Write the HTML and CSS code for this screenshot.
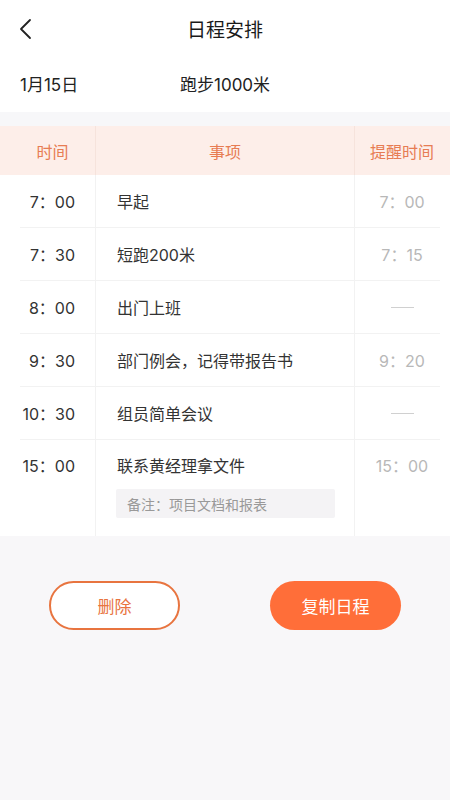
FILE: index.html
```html
<!DOCTYPE html>
<html lang="zh">
<head>
<meta charset="utf-8">
<link rel="stylesheet" href="styles.css">
</head>
<body>
<div class="page">
  <header class="topbar">
    <svg class="back" width="14" height="22" viewBox="0 0 14 22"><path d="M11 2 L2 11 L11 20" fill="none" stroke="#222" stroke-width="1.8" stroke-linecap="round" stroke-linejoin="round"/></svg>
    <h1 class="title">日程安排</h1>
  </header>
  <div class="summary">
    <span class="date">1月15日</span>
    <span class="goal">跑步1000米</span>
  </div>
  <div class="gap"></div>
  <div class="thead">
    <div class="grid">
      <div class="c1 h">时间</div>
      <div class="c2 h">事项</div>
      <div class="c3 h">提醒时间</div>
    </div>
  </div>
  <div class="tbody">
    <div class="grid row">
      <div class="c1">7：00</div>
      <div class="c2">早起</div>
      <div class="c3 r">7：00</div>
    </div>
    <div class="grid row">
      <div class="c1">7：30</div>
      <div class="c2">短跑200米</div>
      <div class="c3 r">7：15</div>
    </div>
    <div class="grid row">
      <div class="c1">8：00</div>
      <div class="c2">出门上班</div>
      <div class="c3 r"><span class="dash"></span></div>
    </div>
    <div class="grid row">
      <div class="c1">9：30</div>
      <div class="c2">部门例会，记得带报告书</div>
      <div class="c3 r">9：20</div>
    </div>
    <div class="grid row">
      <div class="c1">10：30</div>
      <div class="c2">组员简单会议</div>
      <div class="c3 r"><span class="dash"></span></div>
    </div>
    <div class="grid row last">
      <div class="c1 top">15：00</div>
      <div class="c2 top">
        <div>联系黄经理拿文件</div>
        <div class="note">备注：项目文档和报表</div>
      </div>
      <div class="c3 r top">15：00</div>
    </div>
  </div>
  <div class="actions">
    <button class="btn outline">删除</button>
    <button class="btn filled">复制日程</button>
  </div>
</div>
</body>
</html>
```
FILE: styles.css
```css
* { box-sizing: border-box; }
html, body { margin: 0; padding: 0; }
body {
  background: #f8f7f9;
  font-family: "Inter", "Noto Sans CJK SC", "Noto Sans", sans-serif;
  color: #333;
}
.page { width: 450px; min-height: 800px; background: #f8f7f9; }
.topbar {
  position: relative;
  height: 60px;
  background: #fff;
  display: flex;
  align-items: center;
  justify-content: center;
  padding-bottom: 3px;
}
.back { position: absolute; left: 19px; top: 18px; }
.title { margin: 0; font-size: 19px; font-weight: 400; color: #1a1a1a; }
.summary {
  height: 52px;
  background: #fff;
  display: flex;
  align-items: center;
  padding-left: 20px;
  font-size: 17px;
  color: #222;
  padding-bottom: 6px;
}
.date { width: 160px; }
.gap { height: 14px; background: #f7f7f9; }
.thead { background: #fdeee9; height: 49px; }
.grid {
  display: grid;
  grid-template-columns: 75px 260px 85px;
  margin: 0 10px 0 20px;
  height: 100%;
}
.grid > div { display: flex; align-items: center; font-size: 16px; }
.c1 { justify-content: flex-end; padding-right: 20px; }
.c2 { border-left: 1px solid #f1ecec; border-right: 1px solid #f1ecec; padding-left: 21px; }
.c3 { justify-content: center; padding-left: 9px; }
.h { color: #e77c53; }
.thead .c1 { justify-content: center; padding-right: 0; position: relative; left: -5px; }
.thead .c2 { justify-content: center; padding-left: 0; border-color: #f6e3dc; }
.tbody { background: #fff; }
.row { height: 53px; border-bottom: 1px solid #f2f2f2; }
.row .c2 { border-color: #f2f2f2; }
.row.last { height: 96px; border-bottom: none; }
.r { color: #b8b8b8; }
.dash { display: block; width: 23px; height: 1px; background: #d0d0d0; }
.grid > div.top { align-items: flex-start; padding-top: 13px; }
.c2.top { flex-direction: column; align-items: flex-start; }
.note {
  margin-top: 12px;
  width: 219px;
  height: 29px;
  margin-left: -1px;
  background: #f4f3f5;
  border-radius: 2px;
  color: #999;
  font-size: 14px;
  display: flex;
  align-items: center;
  padding-left: 11px;
}
.actions {
  display: flex;
  justify-content: center;
  gap: 90px;
  padding-top: 45px;
}
.btn {
  width: 131px;
  height: 49px;
  border-radius: 25px;
  font-family: inherit;
  font-size: 17px;
  font-weight: 400;
}
.outline { background: #fff; border: 2px solid #e8743f; color: #e8743f; }
.filled { background: #ff6e39; border: none; color: #fff; }
```
